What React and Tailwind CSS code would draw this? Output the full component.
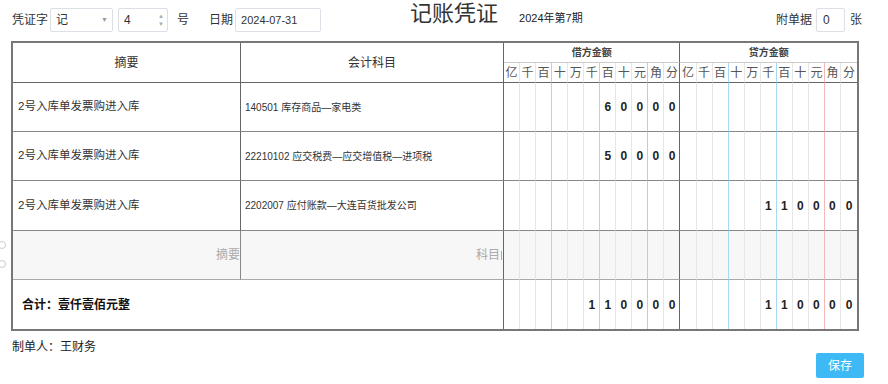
import React from 'react';

const UNITS = ['亿', '千', '百', '十', '万', '千', '百', '十', '元', '角', '分'];

const rows = [
  { summary: '2号入库单发票购进入库', account: '140501 库存商品—家电类', debit: '60000', credit: '' },
  { summary: '2号入库单发票购进入库', account: '22210102 应交税费—应交增值税—进项税', debit: '50000', credit: '' },
  { summary: '2号入库单发票购进入库', account: '2202007 应付账款—大连百货批发公司', debit: '', credit: '110000' },
];

// right border colour of a digit cell, by its index inside the 11 columns
const lineClass = (i, side) => {
  if (i === 2 || i === 5) return 'border-r-[#a9d8f3]';
  if (i === 8) return 'border-r-[#f3b8b8]';
  if (i === 10) return side === 'debit' ? 'border-r-[#666]' : 'border-r-transparent border-r-0';
  return 'border-r-[#e6e6e6]';
};

const DigitCells = ({ value, side, bottom = 'border-b-[#888]', bg = '' }) => {
  const padded = value ? value.padStart(11, ' ').split('') : Array(11).fill(' ');
  return padded.map((d, i) => (
    <div
      key={side + i}
      className={`flex items-center justify-center border-r border-b text-[12px] font-bold text-[#222] ${lineClass(i, side)} ${bottom} ${bg}`}
    >
      {d.trim()}
    </div>
  ));
};

export default function App() {
  return (
    <div className="relative w-[888px] h-[384px] bg-white text-[#333] font-['Liberation_Sans','Noto_Sans_CJK_SC',sans-serif]">
      {/* top bar */}
      <div className="flex h-[41px] items-start pl-[12px] pr-[26px]">
        <div className="mt-[8px] flex h-[24px] items-center text-[12px]">
          <span>凭证字</span>
          <div className="ml-[2px] flex h-[24px] w-[63px] items-center justify-between rounded-[2px] border border-[#dcdfe6] pl-[5px] pr-[4px]">
            <span>记</span>
            <span className="text-[7px] text-[#999]">▼</span>
          </div>
          <div className="ml-[5px] flex h-[24px] w-[50px] items-center justify-between rounded-[2px] border border-[#dcdfe6] pl-[5px] pr-[3px]">
            <span>4</span>
            <div className="flex flex-col text-[6px] leading-[8px] text-[#aaa]">
              <span>▲</span>
              <span>▼</span>
            </div>
          </div>
          <span className="ml-[9px]">号</span>
          <span className="ml-[20px]">日期</span>
          <div className="ml-[2px] flex h-[24px] w-[86px] items-center rounded-[2px] border border-[#dcdfe6] pl-[5px] text-[11px]">
            2024-07-31
          </div>
        </div>
        <div className="ml-[89px] mt-[1px] text-[22px] leading-[26px] text-[#333]">记账凭证</div>
        <div className="ml-[21px] mt-[10px] text-[11px] text-[#222]">2024年第7期</div>
        <div className="ml-auto mt-[8px] flex h-[24px] items-center text-[12px]">
          <span>附单据</span>
          <div className="ml-[4px] flex h-[24px] w-[29px] items-center rounded-[2px] border border-[#dcdfe6] pl-[6px]">0</div>
          <span className="ml-[5px]">张</span>
        </div>
      </div>

      {/* voucher table */}
      <div className="relative ml-[11px] w-[848px] border-2 border-[#777]">
        <div className="absolute left-[-15px] top-[198px] h-[8px] w-[8px] rounded-full border border-[#ccc]" />
        <div className="absolute left-[-15px] top-[217px] h-[8px] w-[8px] rounded-full border border-[#ccc]" />

        <div className="grid grid-cols-[228px_263px_repeat(22,minmax(0,1fr))] grid-rows-[20px_20px_49px_49px_50px_49px_49px]">
          <div className="row-span-2 flex items-center justify-center border-r border-b border-r-[#666] border-b-[#666] text-[12px]">摘要</div>
          <div className="row-span-2 flex items-center justify-center border-r border-b border-r-[#666] border-b-[#666] text-[12px]">会计科目</div>
          <div className="col-span-11 flex items-center justify-center border-r border-b border-r-[#666] border-b-[#ccc] text-[10px] font-semibold text-[#444]">借方金额</div>
          <div className="col-span-11 flex items-center justify-center border-b border-b-[#ccc] text-[10px] font-semibold text-[#444]">贷方金额</div>
          {['debit', 'credit'].map((side) =>
            UNITS.map((u, i) => (
              <div
                key={side + u + i}
                className={`flex items-center justify-center border-r border-b border-b-[#666] text-[12px] text-[#555] ${lineClass(i, side)}`}
              >
                {u}
              </div>
            ))
          )}

          {rows.map((r, idx) => (
            <React.Fragment key={idx}>
              <div className="flex items-center border-r border-b border-r-[#666] border-b-[#888] pl-[5px] text-[11.5px]">{r.summary}</div>
              <div className="flex items-center border-r border-b border-r-[#666] border-b-[#888] pl-[4px] text-[10px]">{r.account}</div>
              <DigitCells value={r.debit} side="debit" />
              <DigitCells value={r.credit} side="credit" />
            </React.Fragment>
          ))}

          {/* empty entry row */}
          <div className="flex items-center justify-end border-r border-b border-r-[#888] border-b-[#aaa] bg-[#f7f7f7] text-[12px] text-[#aaa]">摘要</div>
          <div className="flex items-center justify-end border-r border-b border-r-[#666] border-b-[#aaa] bg-[#f7f7f7] pr-[1px] text-[12px] text-[#aaa]">
            科目
            <span className="ml-[1px] h-[9px] w-[1px] bg-[#7ab8e8]" />
          </div>
          <DigitCells value="" side="debit" bottom="border-b-[#aaa]" bg="bg-[#f7f7f7]" />
          <DigitCells value="" side="credit" bottom="border-b-[#aaa]" bg="bg-[#f7f7f7]" />

          {/* total row */}
          <div className="col-span-2 flex items-center border-r border-r-[#666] pl-[9px] text-[12px] font-bold text-[#111]">合计：壹仟壹佰元整</div>
          <DigitCells value="110000" side="debit" bottom="border-b-0" />
          <DigitCells value="110000" side="credit" bottom="border-b-0" />
        </div>
      </div>

      {/* footer */}
      <div className="pl-[12px] pt-[9px] text-[12px] leading-[14px] text-[#222]">制单人：王财务</div>
      <div className="flex justify-end pr-[24px]">
        <button className="mt-[-1px] h-[25px] w-[48px] rounded-[2px] bg-[#3db9f6] text-[12px] text-white">保存</button>
      </div>
    </div>
  );
}
